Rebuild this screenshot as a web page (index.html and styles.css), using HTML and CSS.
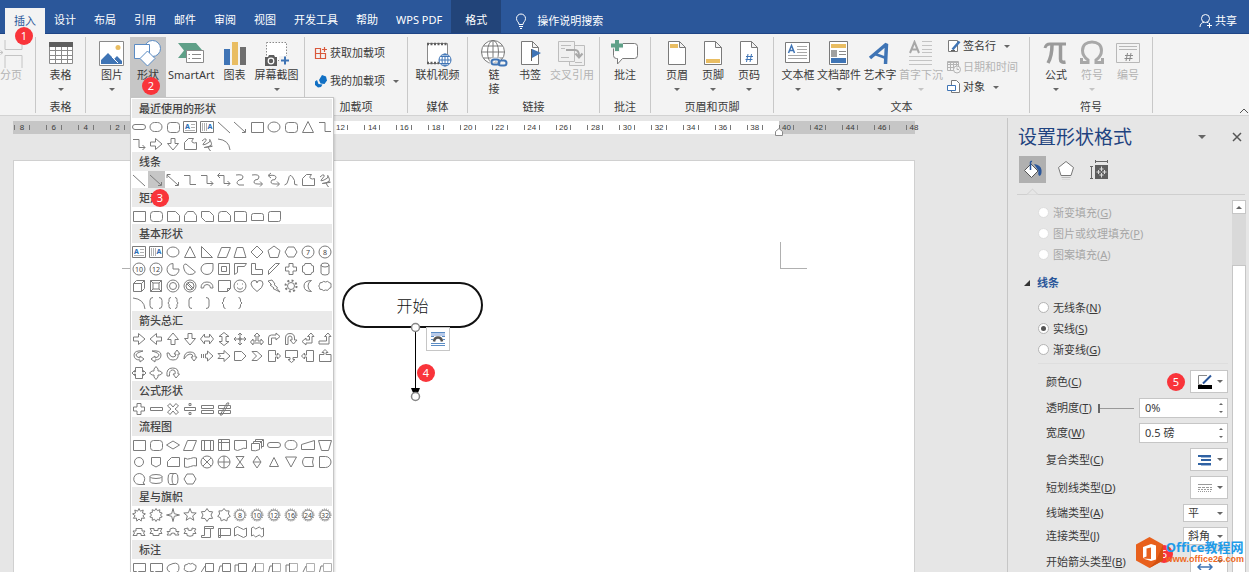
FILE: index.html
```html
<!DOCTYPE html>
<html lang="zh-CN">
<head>
  <meta charset="utf-8">
  <title>设置形状格式</title>
  <link rel="stylesheet" href="styles.css">
</head>
<body>
  <nav class="tab-bar">
    <button class="tab active">插入<span class="badge badge-tab">1</span></button>
    <button class="tab">设计</button>
    <button class="tab">布局</button>
    <button class="tab">引用</button>
    <button class="tab">邮件</button>
    <button class="tab">审阅</button>
    <button class="tab">视图</button>
    <button class="tab">开发工具</button>
    <button class="tab">帮助</button>
    <button class="tab">WPS PDF</button>
    <button class="tab context">格式</button>
    <button class="tell-me">
      <svg width="12" height="16" viewBox="0 0 12 16" fill="none" stroke="#fff"><path d="M4 11.500C4 9 1.500 8.500 1.500 5.500a4.500 4.500 0 0 1 9 0C10.500 8.500 8 9 8 11.500zM4 13.500h4M5 15.500h2"/></svg>
      操作说明搜索
    </button>
    <button class="share">
      <svg width="14" height="14" viewBox="0 0 14 14" fill="none" stroke="#fff"><circle cx="6.500" cy="4.500" r="4"/><path d="M1 13c0-3 2-4.500 4-4.800M8 8.200l1.500.8M8 11.500h5M10.500 9v5"/></svg>
      共享
    </button>
  </nav>

  <div class="ribbon">
    <section class="group">
      <div class="tools first">
        <button class="tool" disabled>
          <svg class="icon" viewBox="0 0 28 28" fill="none" stroke="#c4c4c4"><path d="M8 0v9.500h17V0M8 28V15.500h17V28M2 12.500h4M3.500 10.500l2.500 2-2.500 2"/></svg>
          分页
        </button>
      </div>
    </section>

    <section class="group">
      <div class="tools center">
        <button class="tool">
          <svg class="icon" viewBox="0 0 28 28" fill="#fff" stroke="#8a8a8a"><path d="M2.500 2.500h23v21h-23z"/><path d="M2.500 10.500h23M2.500 15.500h23M2.500 19.500h23M8.500 6v17.500M14.500 6v17.500M20.500 6v17.500"/><path fill="#5e5e5e" stroke="none" d="M2 2h24v5H2z"/></svg>
          表格<i class="caret"></i>
        </button>
      </div>
      <p class="group-name">表格</p>
    </section>

    <section class="group">
      <div class="tools">
        <button class="tool">
          <svg class="icon" viewBox="0 0 28 28"><path fill="#fff" stroke="#8a8a8a" d="M1.500 1.500h24v24h-24z"/><path fill="#3f74b5" d="M3 24v-4l7-7 6 6 3-3 5 5v3z"/><path stroke="#fff" fill="none" d="M14 17l6 6"/><circle cx="20" cy="7.500" r="2.500" fill="#e9bd62"/></svg>
          图片<i class="caret"></i>
        </button>
        <div class="dropdown">
          <button class="tool open">
            <svg class="icon" viewBox="0 0 28 28" fill="#fff" stroke="#5b8cc4"><circle cx="18.500" cy="8.500" r="8"/><path d="M.5 4.500h15v14H.5z"/><path d="M13.500 11l7.500 7.500-7.500 7.500L6 18.500z"/></svg>
            形状<i class="caret"></i>
            <span class="badge badge-shapes">2</span>
          </button>
          <div class="shape-menu" id="shape-menu"></div>
        </div>
        <button class="tool">
          <svg class="icon" viewBox="0 0 28 28"><path fill="#5fa088" d="M1 3h18l6 7-1 1H10v7H1l6-7.500z"/><path fill="#fff" stroke="#8a8a8a" d="M9.500 10.500h17v12h-17z"/><path stroke="#8a8a8a" d="M15 14.500h9M15 18.500h9M11.500 14.500h1.500M11.500 18.500h1.500"/></svg>
          SmartArt
        </button>
        <button class="tool">
          <svg class="icon" viewBox="0 0 28 28"><path fill="#3f74b5" d="M3 9h6v16H3z"/><path fill="#e9bd62" d="M11 2h6v23h-6z"/><path fill="#6e6e6e" d="M19 7h6v18h-6z"/></svg>
          图表
        </button>
        <button class="tool">
          <svg class="icon" viewBox="0 0 28 28"><path fill="#fff" stroke="#8a8a8a" stroke-dasharray="1.500 1.500" d="M3.500 2.500h20v18h-20z"/><path fill="#5e5e5e" d="M2 17h3l1-2h5l1 2h2v9H2z"/><circle cx="8" cy="21" r="2.800" fill="#5e5e5e" stroke="#fff" stroke-width="1.200"/><path fill="#f3f3f3" d="M16 16h11v9H16z"/><path stroke="#3f74b5" stroke-width="2" d="M18 20.500h8M22 16.500v8"/></svg>
          屏幕截图<i class="caret"></i>
        </button>
      </div>
    </section>

    <section class="group">
      <div class="small-tools addins">
        <button class="small-tool">
          <svg class="small-icon" viewBox="0 0 14 14" fill="none" stroke="#d9583b"><path d="M1.500 2.500h5v10h-5zM1.500 7.500h10v5h-10M6.500 7.500v5M10.500 1v5M8 3.500h5" stroke-width="1.200"/></svg>
          获取加载项
        </button>
        <button class="small-tool">
          <svg class="small-icon" viewBox="0 0 14 14" fill="#1170c4"><path d="M8 1l4 1.500 1 4-2.500 3.500-4-.5-1.500-3.500z"/><path d="M3 6l1.500 4 4 .5-1.500 2.500-3 .5L1 11V7.500z"/></svg>
          我的加载项<i class="caret"></i>
        </button>
      </div>
      <p class="group-name">加载项</p>
    </section>

    <section class="group">
      <div class="tools center">
        <button class="tool">
          <svg class="icon" viewBox="0 0 28 28" fill="#fff" stroke="#8a8a8a"><path d="M3.500 3.500h20v20h-20z"/><path stroke="#5e5e5e" stroke-width="2.500" stroke-dasharray="2 1.500" d="M3 4h21M3 23h12"/><circle cx="21" cy="20" r="6" stroke="#3f74b5"/><path fill="none" stroke="#3f74b5" d="M15 20h12M21 14v12M16.500 16.500h9M16.500 23.500h9"/><ellipse cx="21" cy="20" rx="3" ry="6" fill="none" stroke="#3f74b5"/></svg>
          联机视频
        </button>
      </div>
      <p class="group-name">媒体</p>
    </section>

    <section class="group">
      <div class="tools">
        <button class="tool">
          <svg class="icon" viewBox="0 0 28 28" fill="none" stroke="#7a7a7a"><circle cx="13" cy="12" r="11.500" fill="#fff"/><ellipse cx="13" cy="12" rx="5.500" ry="11.500"/><path d="M1.500 12h23M13 .5v23M3.500 6h19M3.500 18h19"/><rect x="11.500" y="19.500" width="8" height="5" rx="2.500" stroke="#f3f3f3" stroke-width="4"/><rect x="11.500" y="19.500" width="8" height="5" rx="2.500" stroke="#3f74b5" stroke-width="2"/><rect x="18.500" y="20.500" width="8" height="5" rx="2.500" stroke="#3f74b5" stroke-width="2"/></svg>
          <span>链<br>接</span>
        </button>
        <button class="tool">
          <svg class="icon" viewBox="0 0 28 28"><path fill="#fff" stroke="#7a7a7a" d="M5.500 1.500h11l6 6v17h-17zM16.500 1.500v6h6"/><path stroke="#5e5e5e" d="M15.500 9v12"/><path fill="#3f74b5" d="M16 9l9 4-9 5z"/></svg>
          书签
        </button>
        <button class="tool" disabled>
          <svg class="icon" viewBox="0 0 28 28" fill="#f0f0f0" stroke="#bdbdbd"><path d="M11.500 5.500h15v20h-15z"/><path d="M.5 1.500h16v20H.5z"/><path d="M3 5.500h10M3 8.500h4M3 17.500h8M17 22.500h7"/><path stroke="#a8a8a8" stroke-width="2" fill="none" d="M8 10h9q4 0 4 6M17.500 13.500l3.500 4 3.500-4"/></svg>
          交叉引用
        </button>
      </div>
      <p class="group-name">链接</p>
    </section>

    <section class="group">
      <div class="tools center">
        <button class="tool">
          <svg class="icon" viewBox="0 0 28 28"><path fill="#fff" stroke="#7a7a7a" d="M4.500 3.500h19q3 0 3 3v9q0 3-3 3h-12l-5 5.500v-5.500h-1q-3 0-3-3v-9q0-3 3-3z"/><path stroke="#f3f3f3" stroke-width="6" d="M0 5.500h12M6 0v12"/><path stroke="#5fa088" stroke-width="4" d="M0 5.500h12M6 0v11"/></svg>
          批注
        </button>
      </div>
      <p class="group-name">批注</p>
    </section>

    <section class="group">
      <div class="tools">
        <button class="tool">
          <svg class="icon" viewBox="0 0 28 28"><path fill="#fff" stroke="#7a7a7a" d="M5.500 1.500h11l6 6v17h-17zM16.500 1.500v6h6"/><path fill="#e9bd62" d="M7 4h8v4H7z"/></svg>
          页眉<i class="caret"></i>
        </button>
        <button class="tool">
          <svg class="icon" viewBox="0 0 28 28"><path fill="#fff" stroke="#7a7a7a" d="M5.500 1.500h11l6 6v17h-17zM16.500 1.500v6h6"/><path fill="#e9bd62" d="M7 19h14v4H7z"/></svg>
          页脚<i class="caret"></i>
        </button>
        <button class="tool">
          <svg class="icon" viewBox="0 0 28 28"><path fill="#fff" stroke="#7a7a7a" d="M5.500 1.500h11l6 6v17h-17zM16.500 1.500v6h6"/><path fill="none" stroke="#3f74b5" d="M13 14l-1.500 8M16.500 14L15 22M11 16.500h7M10.500 19.500h7"/></svg>
          页码<i class="caret"></i>
        </button>
      </div>
      <p class="group-name">页眉和页脚</p>
    </section>

    <section class="group">
      <div class="tools text-tools">
        <button class="tool">
          <svg class="icon" viewBox="0 0 28 28"><path fill="#fff" stroke="#7a7a7a" d="M1.500 2.500h24v20h-24z"/><path stroke="#a8a8a8" d="M13 6.500h10M13 9.500h10M13 12.500h10M4 15.500h19M4 18.500h19"/><path stroke="#3f74b5" stroke-width="1.500" fill="none" d="M4.500 13L7.500 5.500l3 7.500M5.500 10.500h4"/></svg>
          文本框<i class="caret"></i>
        </button>
        <button class="tool">
          <svg class="icon" viewBox="0 0 28 28"><path fill="#fff" stroke="#7a7a7a" d="M4.500 1.500h18v23h-18z"/><path fill="#e9bd62" d="M6 4h15v4H6z"/><path fill="#a0a0a0" d="M6 10h6v7H6z"/><path fill="#3f74b5" d="M6 18h15v5H6z"/><path stroke="#8a8a8a" d="M14 11.500h7M14 14.500h7"/></svg>
          文档部件<i class="caret"></i>
        </button>
        <button class="tool">
          <svg class="icon" viewBox="0 0 28 28"><path fill="none" stroke="#3f74b5" stroke-width="3.500" stroke-linejoin="bevel" d="M4 18l16.500-14-1 20"/><path stroke="#3f74b5" stroke-width="2.500" d="M9 14l11 4"/></svg>
          艺术字<i class="caret"></i>
        </button>
        <button class="tool" disabled>
          <svg class="icon" viewBox="0 0 28 28" fill="none" stroke="#c4c4c4"><path d="M15 1.500h10M15 5.500h10M15 9.500h10M15 12.500h10M2 16.500h23M2 20.500h23M2 24.500h23"/><path stroke="#a8a8a8" stroke-width="2" d="M3 13L7.500 2l4.500 11M4.500 9.500h6"/></svg>
          首字下沉<i class="caret"></i>
        </button>
        <div class="small-tools">
          <button class="small-tool">
            <svg class="small-icon" viewBox="0 0 14 14"><path fill="#fff" stroke="#7a7a7a" d="M1.500 1.500h9v11h-9z"/><path stroke="#3f74b5" stroke-width="2.500" d="M5.500 10.500l7-8"/><path stroke="#5e5e5e" d="M4 11.500h4"/></svg>
            签名行<i class="caret"></i>
          </button>
          <button class="small-tool" disabled>
            <svg class="small-icon" viewBox="0 0 14 14" fill="none" stroke="#b4b4b4"><path d="M.5 1.500h11v9H.5zM.5 4.500h11M.5 7.500h11M3.500 2v8.500M6.500 2v8.500M9.500 2v4M.5 2.500h11"/><circle cx="10" cy="9.500" r="3.500" fill="#f3f3f3"/><path d="M10 7.500v2h2"/></svg>
            日期和时间
          </button>
          <button class="small-tool">
            <svg class="small-icon" viewBox="0 0 14 14" fill="#fff"><path stroke="#7a7a7a" d="M4.500.5h5l3 3v9h-8z"/><path stroke="#3f74b5" d="M.5 5.500h8v5h-8z"/></svg>
            对象<i class="caret"></i>
          </button>
        </div>
      </div>
      <p class="group-name">文本</p>
    </section>

    <section class="group">
      <div class="tools">
        <button class="tool">
          <svg class="icon" viewBox="0 0 28 28" fill="none" stroke="#9a9a9a"><path stroke-width="3" d="M3 8q1-4 5-4h16"/><path stroke-width="3.500" d="M10 5q0 11-4 18M18.500 5v14q0 4 5 3"/></svg>
          公式<i class="caret"></i>
        </button>
        <button class="tool" disabled>
          <svg class="icon" viewBox="0 0 28 28" fill="none" stroke="#a8a8a8"><path stroke-width="3" d="M3.500 18v4.500H10V20Q4.500 16 4.500 10.500C4.500 5 8.500 2 14 2s9.500 3 9.500 8.500Q23.500 16 18 20v2.500h6.500V18"/></svg>
          符号<i class="caret"></i>
        </button>
        <button class="tool" disabled>
          <svg class="icon" viewBox="0 0 28 28" fill="none" stroke="#b8b8b8"><path d="M2.500 3.500h23v19h-23zM5 6.500h18M5 9.500h18"/><path stroke="#8a8a8a" d="M13.500 13L12 21M17 13l-1.500 8M11 15.500h8M10.500 18.500h8"/></svg>
          编号
        </button>
      </div>
      <p class="group-name">符号</p>
    </section>

    <button class="collapse" aria-label="折叠功能区">
      <svg width="10" height="7" viewBox="0 0 10 7" fill="none" stroke="#555"><path d="M1 6l4-4 4 4"/></svg>
    </button>
  </div>

  <div class="workspace">
    <main class="document">
      <div class="ruler">
        <div class="ruler-scale">
          <span>8</span><span>6</span><span>4</span><span>2</span><span></span>
          <span>2</span><span>4</span><span>6</span><span>8</span><span>10</span>
          <span>12</span><span>14</span><span>16</span><span>18</span><span>20</span>
          <span>22</span><span>24</span><span>26</span><span>28</span><span>30</span>
          <span>32</span><span>34</span><span>36</span><span>38</span><span>40</span>
          <span>42</span><span>44</span><span>46</span><span>48</span>
        </div>
        <svg class="indent" width="8" height="8" viewBox="0 0 8 8"><path fill="#fff" stroke="#8a8a8a" d="M.5 7.500v-4L4 .5l3.500 3v4z"/></svg>
      </div>
      <div class="page">
        <i class="crop crop-left"></i>
        <i class="crop crop-right"></i>
        <div class="terminator">开始</div>
        <svg class="connector" width="11" height="80" viewBox="0 0 11 80">
          <path stroke="#000" d="M5.500 5v64"/>
          <path fill="#000" d="M1 66h9L7.500 72h-4z"/>
          <circle cx="5.500" cy="5.500" r="4" fill="#fff" stroke="#868686" stroke-width="1.500"/>
          <circle cx="5.500" cy="74.500" r="4" fill="#fff" stroke="#868686" stroke-width="1.500"/>
        </svg>
        <button class="layout-options" aria-label="布局选项">
          <svg width="16" height="16" viewBox="0 0 16 16" fill="none"><path fill="#b8cbea" d="M1 1h14v4H1z"/><path stroke="#5b8cc4" d="M1 1.500h14M1 5.500h3M12 5.500h3M1 8.500h2M13 8.500h2M1 12.500h14M1 14.500h14"/><path stroke="#555" stroke-width="2.500" d="M4 10.500Q4.500 6.500 8 6.500t4 4"/></svg>
        </button>
        <span class="badge badge-arrow">4</span>
      </div>
    </main>

    <aside class="panel">
      <header class="panel-head">
        <h2>设置形状格式</h2>
        <button class="panel-menu" aria-label="任务窗格选项"><i class="caret"></i></button>
        <button class="panel-close" aria-label="关闭">
          <svg width="10" height="10" viewBox="0 0 10 10" stroke="#555" stroke-width="1.500"><path d="M1 1l8 8M9 1L1 9"/></svg>
        </button>
      </header>
      <div class="panel-tabs">
        <button class="panel-tab selected" aria-label="填充与线条">
          <svg width="20" height="20" viewBox="0 0 20 20"><path fill="#2b579a" d="M11 4q7 1 7.500 6t-2 6q-2-1-1-5z"/><path fill="#fff" stroke="#555" d="M8 4l7 7-6.500 6.500-7-7z"/><path stroke="#2b579a" stroke-width="1.500" fill="none" d="M7.500 10V2.500q0-1.500 1.500-1"/></svg>
        </button>
        <button class="panel-tab" aria-label="效果">
          <svg width="20" height="20" viewBox="0 0 20 20"><path fill="#fff" stroke="#777" d="M10 1.500l7.500 6L15 15.500H5L2.500 7.500z"/><path stroke="#bbb" d="M5.500 17.500h9"/><path stroke="#d8d8d8" d="M6 19.500h8"/></svg>
        </button>
        <button class="panel-tab size-tab" aria-label="布局属性">
          <svg width="20" height="20" viewBox="0 0 20 20" fill="none" stroke="#666"><path d="M6 1.500h13M6.500 0v3M18.500 0v3M2.500 6v13M1 6.500h3M1 18.500h3"/><path fill="#5e5e5e" stroke="none" d="M6 5h13v14H6z"/><path stroke="#ddd" d="M7.500 12h4M13.500 12h4M12.500 6.500v4.500M12.500 13v4.500M9.500 10v4M15.500 10v4M10.500 9h4M10.500 15h4"/></svg>
        </button>
      </div>
      <div class="panel-body">
        <form class="options">
          <label class="radio"><input type="radio" name="fill" disabled>渐变填充(<u>G</u>)</label>
          <label class="radio"><input type="radio" name="fill" disabled>图片或纹理填充(<u>P</u>)</label>
          <label class="radio"><input type="radio" name="fill" disabled>图案填充(<u>A</u>)</label>

          <h3>线条</h3>
          <label class="radio"><input type="radio" name="line">无线条(<u>N</u>)</label>
          <label class="radio"><input type="radio" name="line" checked>实线(<u>S</u>)</label>
          <label class="radio"><input type="radio" name="line">渐变线(<u>G</u>)</label>

          <div class="fields">
            <div class="field">
              <label for="color">颜色(<u>C</u>)</label>
              <span class="badge">5</span>
              <button type="button" class="picker" id="color">
                <svg width="16" height="16" viewBox="0 0 16 16"><path fill="#fff" stroke="#8a8a8a" d="M10 1.500H1.500v9H5"/><path stroke="#2b579a" stroke-width="2" d="M6 9.500l8-8"/><path fill="#000" d="M1 11h14v4H1z"/></svg>
                <i class="caret"></i>
              </button>
            </div>
            <div class="field">
              <label for="alpha">透明度(<u>T</u>)</label>
              <input type="range" id="alpha-slider" aria-label="透明度" min="0" max="100" value="0">
              <span class="spin"><input type="text" id="alpha" value="0%"><i class="spin-arrows"></i></span>
            </div>
            <div class="field">
              <label for="weight">宽度(<u>W</u>)</label>
              <span class="spin"><input type="text" id="weight" value="0.5 磅"><i class="spin-arrows"></i></span>
            </div>
            <div class="field">
              <label for="compound">复合类型(<u>C</u>)</label>
              <button type="button" class="picker" id="compound">
                <svg width="16" height="16" viewBox="0 0 16 16"><path stroke="#2f62a3" stroke-width="2" d="M1 4h13M4 8h10M1 12h13"/><path stroke="#9db7da" d="M4 5.500h10M4 13.500h10"/></svg>
                <i class="caret"></i>
              </button>
            </div>
            <div class="field">
              <label for="dash">短划线类型(<u>D</u>)</label>
              <button type="button" class="picker" id="dash">
                <svg width="16" height="16" viewBox="0 0 16 16" stroke="#9a9a9a"><path d="M1 4.500h14"/><path stroke-dasharray="3 1" d="M1 7.500h14"/><path stroke-dasharray="2 1" d="M1 9.500h14"/><path stroke-dasharray="1 1" d="M1 11.500h14"/></svg>
                <i class="caret"></i>
              </button>
            </div>
            <div class="field">
              <label for="cap">线端类型(<u>A</u>)</label>
              <span class="select"><select id="cap"><option>平</option></select><i class="caret"></i></span>
            </div>
            <div class="field">
              <label for="join">连接类型(<u>J</u>)</label>
              <span class="select"><select id="join"><option>斜角</option></select><i class="caret"></i></span>
            </div>
            <div class="field">
              <label for="begin">开始箭头类型(<u>B</u>)</label>
              <span class="badge badge-begin">6</span>
              <button type="button" class="picker" id="begin">
                <svg width="16" height="16" viewBox="0 0 16 16"><path stroke="#3f74b5" stroke-width="1.500" fill="none" d="M1 13h14M4 10l-3 3 3 3M12 10l3 3-3 3"/></svg>
                <i class="caret"></i>
              </button>
            </div>
          </div>
        </form>
        <div class="scrollbar">
          <button class="scroll-up" aria-label="向上滚动"><i class="caret"></i></button>
          <div class="scroll-thumb"></div>
        </div>
      </div>
    </aside>
  </div>

  <div class="site-mark">
    <svg width="27" height="31" viewBox="0 0 27 31"><path fill="#e8601c" d="M13.500 0L27 7.500v16L13.500 31 0 23.500v-16z"/><path fill="#d3500f" d="M13.500 31L27 23.500v-16L20 24z"/><path fill="#fff" d="M7 10l8-3 5 1.500v14L15 24l-8-2.500 8 .5V10.500l-4.500 1v8L7 21z"/></svg>
    <div>
      <p class="site-name">Office教程网</p>
      <p class="site-url">www.office26.com</p>
    </div>
  </div>

  <script src="shapes.js"></script>
</body>
</html>
```
FILE: styles.css
```css
* {
  box-sizing: border-box;
}

body {
  display: flex;
  flex-direction: column;
  position: relative;
  height: 100vh;
  margin: 0;
  overflow: hidden;
  background: #e6e6e6;
  color: #3a3a3a;
  font: 11px/14px "Noto Sans", "Noto Sans CJK SC", sans-serif;
}

button,
input,
select {
  margin: 0;
  padding: 0;
  border: 0;
  background: none;
  color: inherit;
  font: inherit;
}

h2,
h3,
p {
  margin: 0;
}

svg {
  flex: none;
}

.caret {
  flex: none;
  width: 0;
  height: 0;
  border: 3px solid transparent;
  border-top-color: #666;
  border-bottom: 0;
}

.badge {
  flex: none;
  width: 18px;
  height: 18px;
  border-radius: 50%;
  background: #f9343a;
  color: #fff;
  line-height: 18px;
  text-align: center;
}

/* Tabs */

.tab-bar {
  display: flex;
  flex: none;
  height: 34px;
  padding-left: 5px;
  background: #2b579a;
  border-bottom: 1px solid #1f4586;
  color: #fff;
}

.tab {
  position: relative;
  padding: 7px 9px 0;
  white-space: nowrap;
}

.tab.active {
  height: 27px;
  margin-top: 8px;
  padding-top: 0;
  padding-bottom: 2px;
  background: #f3f3f3;
  color: #2b579a;
}

.tab.context {
  padding: 7px 14px 0;
  background: #224479;
}

.badge-tab {
  position: absolute;
  top: 19px;
  left: 10px;
  z-index: 2;
}

.tell-me,
.share {
  display: flex;
  align-items: center;
  gap: 10px;
  padding: 8px 0 0 14px;
}

.share {
  gap: 2px;
  margin-left: auto;
  padding-right: 12px;
}

/* Ribbon */

.ribbon {
  display: grid;
  grid-template-columns: 36px 50px 219px 103px 60px 132px 51px 123px 256px 123px 1fr;
  flex: none;
  position: relative;
  z-index: 1;
  height: 82px;
  padding-top: 3px;
  background: #f3f3f3;
  border-bottom: 1px solid #d2d2d2;
}

.group {
  display: flex;
  flex-direction: column;
  min-width: 0;
  height: 76px;
  border-right: 1px solid #c8c8c8;
}

.tools {
  display: flex;
  flex: none;
  height: 60px;
  padding-left: 8px;
}

.tools.first {
  justify-content: flex-end;
  padding: 0 6px 0 0;
}

.tools.center {
  justify-content: center;
  padding: 0;
}

.tool {
  display: flex;
  flex: none;
  flex-direction: column;
  align-items: center;
  position: relative;
  min-width: 36px;
  height: 60px;
  padding: 3px 2px 0;
  white-space: nowrap;
}

.tool:disabled,
.small-tool:disabled {
  color: #b4b4b4;
}

.tool:disabled .caret {
  border-top-color: #c4c4c4;
}

.tool .icon {
  width: 28px;
  height: 28px;
}

.tool .caret {
  margin-top: 6px;
}

.tool.open {
  background: #c6c6c6;
}

.text-tools {
  gap: 1px;
  padding-left: 6px;
}

.text-tools .tool {
  padding-right: 0;
  padding-left: 0;
}

.group-name {
  line-height: 20px;
  text-align: center;
}

.small-tools {
  display: flex;
  flex: none;
  flex-direction: column;
  justify-content: space-between;
  height: 60px;
  padding: 2px 0 3px 3px;
}

.small-tools.addins {
  padding: 9px 0 9px 9px;
}

.small-tool {
  display: flex;
  align-items: center;
  gap: 2px;
  white-space: nowrap;
}

.small-tool .caret {
  margin-left: 6px;
}

.small-icon {
  width: 14px;
  height: 14px;
}

.collapse {
  align-self: end;
  justify-self: end;
  height: 12px;
}

.badge-shapes {
  position: absolute;
  top: 40px;
  left: 12px;
}

/* Shape gallery */

.dropdown {
  position: relative;
}

.shape-menu {
  position: absolute;
  top: 60px;
  left: 0;
  width: 204px;
  padding-top: 1px;
  background: #fff;
  border: 1px solid #c6c6c6;
  box-shadow: 1px 1px 2px rgba(0, 0, 0, 0.15);
}

.shape-menu h3 {
  margin: 0 1px;
  padding-left: 7px;
  background: #eaeaea;
  color: #444;
  font-size: 11px;
  font-weight: 500;
  line-height: 19px;
}

.shape-grid {
  display: grid;
  grid-template-columns: repeat(12, 1fr);
}

.shape {
  display: flex;
  align-items: center;
  justify-content: center;
  height: 17px;
}

.shape.selected {
  background: #c6c6c6;
}

.shape svg {
  width: 16px;
  height: 16px;
  fill: none;
  stroke: #7c7c7c;
}

.shape text {
  fill: #444;
  stroke: none;
  font-size: 7px;
  text-anchor: middle;
}

.shape .letter {
  fill: #2b6cb5;
  font-weight: bold;
}

.shape .faint {
  stroke: #b0b0b0;
}

.badge-line {
  position: absolute;
  top: 91px;
  left: 20px;
}

/* Document */

.workspace {
  display: grid;
  grid-template-columns: 1fr 242px;
  flex: 1;
  min-height: 0;
  padding-top: 2px;
}

.document {
  display: flex;
  flex-direction: column;
  gap: 26px;
  min-width: 0;
  padding: 3px 92px 0 13px;
}

.ruler {
  flex: none;
  position: relative;
  height: 13px;
  background: linear-gradient(to right, #c6c6c6 136px, #fff 136px, #fff 766px, #c6c6c6 766px);
}

.ruler-scale {
  display: flex;
  margin: 0 -15px 0 -7px;
  font: 8px/13px "Liberation Sans", sans-serif;
}

.ruler-scale span {
  display: flex;
  flex: 1 0 0;
  align-items: center;
  justify-content: space-between;
  padding: 0 8px;
}

.ruler-scale span::before,
.ruler-scale span::after {
  content: "";
  width: 1px;
  height: 5px;
  background: #777;
}

.ruler-scale span:last-child::after {
  background: none;
}

.indent {
  position: absolute;
  top: 7px;
  left: 762px;
}

.page {
  flex: 1;
  position: relative;
  background: #fff;
  border: 1px solid #d0d0d0;
  border-bottom: 0;
}

.crop {
  position: absolute;
  top: 81px;
  width: 27px;
  height: 27px;
  border-bottom: 1px solid #b0b0b0;
}

.crop-left {
  left: 108px;
  border-right: 1px solid #b0b0b0;
}

.crop-right {
  right: 107px;
  border-left: 1px solid #b0b0b0;
}

.terminator {
  position: absolute;
  top: 121px;
  left: 328px;
  width: 141px;
  height: 46px;
  border: 2px solid #111;
  border-radius: 23px;
  color: #111;
  font: 300 16px/46px "Liberation Serif", "Noto Sans CJK SC", serif;
  text-align: center;
}

.connector {
  position: absolute;
  top: 161px;
  left: 396px;
}

.layout-options {
  display: flex;
  align-items: center;
  justify-content: center;
  position: absolute;
  top: 166px;
  left: 412px;
  width: 24px;
  height: 24px;
  background: #fff;
  border: 1px solid #c6c6c6;
}

.badge-arrow {
  position: absolute;
  top: 203px;
  left: 403px;
}

/* Format pane */

.panel {
  display: flex;
  flex-direction: column;
  min-height: 0;
  border-left: 1px solid #c6c6c6;
}

.panel-head {
  display: flex;
  align-items: center;
  padding: 8px 7px 0 10px;
}

.panel-head h2 {
  flex: 1;
  color: #1f4380;
  font-size: 19px;
  font-weight: normal;
  line-height: 22px;
}

.panel-menu {
  margin-right: 26px;
}

.panel-menu .caret {
  display: block;
  border-width: 4px;
  border-bottom: 0;
}

.panel-close svg {
  display: block;
}

.panel-tabs {
  display: flex;
  gap: 6px;
  position: relative;
  margin: 8px 4px 0 9px;
  padding: 0 2px 11px;
  border-bottom: 1px solid #cfcfcf;
}

.panel-tabs::after {
  content: "";
  position: absolute;
  bottom: -5px;
  left: 11px;
  width: 8px;
  height: 8px;
  background: #e6e6e6;
  border: solid #cfcfcf;
  border-width: 1px 0 0 1px;
  clip-path: polygon(0 0, 100% 0, 0 100%);
  transform: rotate(45deg);
}

.panel-tab {
  display: flex;
  align-items: center;
  justify-content: center;
  width: 27px;
  height: 27px;
}

.panel-tab.selected {
  background: #b0b0b0;
}

.panel-body {
  display: flex;
  flex: 1;
  min-height: 0;
  margin-top: 5px;
}

.options {
  flex: 1;
  padding: 2px 4px 0 0;
}

.radio {
  display: flex;
  align-items: center;
  height: 21px;
  padding-left: 30px;
  white-space: pre;
}

.radio input {
  appearance: none;
  display: grid;
  place-items: center;
  width: 11px;
  height: 11px;
  margin-right: 4px;
  background: #fff;
  border: 1px solid #b4b4b4;
  border-radius: 50%;
}

.radio input:checked::before {
  content: "";
  width: 5px;
  height: 5px;
  border-radius: 50%;
  background: #555;
}

.radio input:disabled {
  border-color: #dedede;
}

.radio:has(:disabled) {
  color: #a6a6a6;
}

.options h3 {
  display: flex;
  align-items: center;
  gap: 7px;
  height: 20px;
  margin: 8px 0 4px;
  padding-left: 16px;
  color: #2b579a;
  font-size: 11px;
}

.options h3::before {
  content: "";
  border: solid transparent;
  border-width: 0 0 6px 6px;
  border-bottom-color: #333;
}

.fields {
  display: flex;
  flex-direction: column;
  gap: 5px;
  margin: 3px 0 0 30px;
  padding: 6px 0 0 8px;
  border-top: 1px solid #dedede;
}

.field {
  display: flex;
  align-items: center;
  position: relative;
}

.field label {
  margin-right: auto;
  white-space: nowrap;
}

.field .badge {
  margin-right: 5px;
}

.field .badge-begin {
  position: absolute;
  top: -5px;
  right: 50px;
}

.picker,
.spin,
.select {
  display: flex;
  align-items: center;
  background: #fff;
  border: 1px solid #c6c6c6;
}

.picker {
  gap: 4px;
  height: 23px;
  padding: 0 4px 0 6px;
}

.spin {
  width: 89px;
  height: 20px;
  padding: 0 4px 0 5px;
}

.spin input {
  flex: 1;
  min-width: 0;
}

.spin-arrows {
  display: flex;
  flex-direction: column;
  gap: 6px;
}

.spin-arrows::before,
.spin-arrows::after {
  content: "";
  border: 2px solid transparent;
}

.spin-arrows::before {
  border-top: 0;
  border-bottom-color: #666;
}

.spin-arrows::after {
  border-top-color: #666;
  border-bottom: 0;
}

.select {
  width: 45px;
  height: 18px;
  padding: 0 4px;
}

.select select {
  appearance: none;
  flex: 1;
}

#alpha-slider {
  appearance: none;
  width: 36px;
  height: 9px;
  margin-right: 5px;
  background: linear-gradient(#999, #999) center / 100% 1px no-repeat;
}

#alpha-slider::-webkit-slider-thumb {
  appearance: none;
  width: 2px;
  height: 9px;
  background: #666;
}

.scrollbar {
  display: flex;
  flex-direction: column;
  width: 14px;
  margin-right: 3px;
  background: #d9d9d9;
}

.scroll-up {
  display: flex;
  align-items: center;
  justify-content: center;
  height: 14px;
  background: #fff;
  border: 1px solid #c6c6c6;
}

.scroll-up .caret {
  transform: rotate(180deg);
}

.scroll-thumb {
  flex: 1;
  margin-top: 51px;
  background: #fff;
  border: 1px solid #c6c6c6;
  border-bottom: 0;
}

/* Site mark */

.site-mark {
  display: flex;
  align-items: center;
  gap: 3px;
  position: absolute;
  right: 5px;
  bottom: 4px;
  z-index: 1;
  font-weight: bold;
}

.site-name {
  color: #1e9be9;
  font-size: 13px;
  line-height: 13px;
}

.site-url {
  color: #ee6a1f;
  font-family: "Liberation Sans", sans-serif;
  font-size: 9px;
  line-height: 10px;
}
```
FILE: shapes.js
```js
// Each shape is [name, drawing] on a 16 x 16 grid. A drawing is either the
// path data or a bit of SVG markup.
var textBox = '<path d="M1.500 2.500h13v11h-13z"/><path class="faint" d="M9 5.500h4M9 8.500h4M3 11.500h10"/><text class="letter" x="5.500" y="10">A</text>';
var textBoxV = '<path d="M1.500 2.500h13v11h-13z"/><path class="faint" d="M3.500 4v8M5.500 4v8M7.500 4v8"/><text class="letter" x="11" y="10">A</text>';
var line = "M2 3l12 11";
var arrow = "M2 3l11 10M13.500 10v3.500H10";
var doubleArrow = "M2 3l11 10M13.500 10v3.500H10M2 6V2.500h3.500";
var elbow = "M2 3.500h6v9h6";
var elbowArrow = "M2 3.500h6v8h6M11.500 9l2.500 2.500-2.500 2.500";
var freeform = "M2.500 13.500v-7l4-4h5q-3 3-1 4t4 0v7z";
var scribble = "M3 5q3-3 4-2t-2 4 2 1 4-4 1 2-4 5 1 0 3-1-2 3 1 1";
var arc = "M2 3q11 1 12 11";
var rect = "M2.500 3.500h12v10h-12z";
var roundRect = '<rect x="2.500" y="3.500" width="12" height="10" rx="3"/>';
var terminator = '<rect x="1.500" y="5.500" width="13" height="5" rx="2.500"/>';
var octoRect = '<rect x="2" y="3.500" width="12" height="9" rx="4.500"/>';
var ellipse = '<ellipse cx="8" cy="8" rx="6" ry="5"/>';
var triangle = "M8 2.500l5.500 11h-11z";
var rightArrow = "M2.500 6h5V2.500L14 8l-6.500 5.500V10h-5z";
var downArrow = "M6 2.500v5H2.500L8 14l5.500-6.500H10v-5z";
var hexagon = "M5 3h6l3 5-3 5H5L2 8z";
var parallelogram = "M5.500 3.500h9l-4 10h-9z";
var plus = "M6 2.500h4V6h3.500v4H10v3.500H6V10H2.500V6H6z";

function numbered(n, teeth) {
  return '<circle cx="8" cy="8" r="' + (teeth ? 5 : 6) + '"/>' +
    (teeth ? '<circle cx="8" cy="8" r="6" stroke-dasharray="1 1.200"/>' : '') +
    '<text x="8" y="10.500">' + n + '</text>';
}

function star(points, inner) {
  var d = "";
  for (var i = 0; i < points * 2; i++) {
    var r = i % 2 ? inner : 6.5;
    var a = Math.PI * i / points - Math.PI / 2;
    d += (i ? "L" : "M") + (8 + r * Math.cos(a)).toFixed(1) + " " + (8 + r * Math.sin(a)).toFixed(1);
  }
  return d + "z";
}

var categories = [
  ["最近使用的形状", [
    ["终止", terminator], ["准备", octoRect], ["圆角矩形", roundRect],
    ["文本框", textBox], ["竖排文本框", textBoxV], ["直线", line],
    ["箭头", arrow], ["矩形", rect], ["椭圆", ellipse], ["圆角矩形", roundRect],
    ["三角形", triangle], ["肘形", elbow], ["肘形箭头", elbowArrow],
    ["右箭头", rightArrow], ["下箭头", downArrow], ["任意多边形", freeform],
    ["自由曲线", scribble], ["弧形", arc]
  ]],
  ["线条", [
    ["直线", line], ["箭头", arrow], ["双箭头", doubleArrow], ["肘形", elbow],
    ["肘形箭头", elbowArrow], ["肘形双箭头", elbowArrow + "M4 1L1.500 3.500 4 6"],
    ["曲线连接", "M4 3q7-1 7 2T7 8q-4 3 0 5h5"],
    ["曲线箭头", "M3 3q7-1 7 2T6 8q-3 4 3 4h4M11 9.500l2.500 2.500-2.500 2.500"],
    ["曲线双箭头", "M3 3.500q7-1 7 2T6 8q-3 4 3 4h4M11 9.500l2.500 2.500-2.500 2.500M5 1L2 3.500 5 6"],
    ["曲线", "M1.500 13q3 0 4-6t4-2 2 6 3 2"], ["任意多边形", freeform], ["自由曲线", scribble]
  ]],
  ["矩形", [
    ["矩形", rect], ["圆角矩形", roundRect], ["剪去单角", "M2.500 3.500h8l4 4v6h-12z"],
    ["剪去同侧角", "M5.500 3.500h6l3 4v6h-12v-6z"], ["剪去对角", "M2.500 3.500h8l4 4v6h-8l-4-4z"],
    ["单圆角剪角", "M5.500 3.500h5l4 4v6h-12v-7q0-3 3-3z"],
    ["单圆角", "M2.500 3.500h10q2 0 2 2v8h-12z"], ["同侧圆角", "M4.500 5.500h8q2 0 2 2v5h-12v-5q0-2 2-2z"],
    ["对角圆角", "M4.500 3.500h10v8q0 2-2 2h-10v-8q0-2 2-2z"]
  ]],
  ["基本形状", [
    ["文本框", textBox], ["竖排文本框", textBoxV], ["椭圆", ellipse], ["三角形", triangle],
    ["直角三角形", "M2.500 2.500l11 11h-11z"], ["平行四边形", parallelogram],
    ["梯形", "M5 3.500h6l3 10H2z"], ["菱形", "M8 2l6 6-6 6-6-6z"],
    ["五边形", "M8 2l6 4.500-2 7H4l-2-7z"], ["六边形", hexagon],
    ["七边形", numbered(7)], ["八边形", numbered(8)],
    ["十边形", numbered(10)], ["十二边形", numbered(12)],
    ["饼形", "M8 2.500V8h6a6 6 0 1 1-6-5.500z"], ["弦形", "M4 3l9.500 8q-2 3-6 2.500T2 8t2-5z"],
    ["泪滴形", "M14 2.500V8a6 5.500 0 1 1-6-5.500z"], ["图文框", "M2.500 2.500h11v11h-11zM5.500 5.500h5v5h-5z"],
    ["半闭框", "M2.500 2.500h12l-2 3h-7v6l-3 2z"], ["L 形", "M2.500 2.500h4v6h7v5h-11z"],
    ["斜纹", "M2.500 13.500v-4l7-7h4z"], ["十字形", plus],
    ["缺角矩形", "M5 2.500h6q0 2.500 2.500 2.500v6q-2.500 0-2.500 2.500H5Q5 11 2.500 11V5Q5 5 5 2.500z"],
    ["圆柱形", "M4 4v8q0 2 4 2t4-2V4q0-2-4-2T4 4q0 2 4 2t4-2"],
    ["立方体", "M2.500 5.500h8v8h-8zM2.500 5.500l3-3h8v8l-3 3M10.500 5.500l3-3"],
    ["棱台", "M2.500 2.500h11v11h-11zM5 5h6v6H5zM2.500 2.500L5 5M13.500 2.500L11 5M2.500 13.500L5 11M13.500 13.500L11 11"],
    ["圆环", '<circle cx="8" cy="8" r="6"/><circle cx="8" cy="8" r="3.500"/>'],
    ["禁止符", '<circle cx="8" cy="8" r="6"/><circle cx="8" cy="8" r="4"/><path d="M5 6l5 5M6 5l5 5"/>'],
    ["空心弧", "M2 10q0-6 6-6t6 6h-2.500q0-3.500-3.500-3.500T4.500 10z"],
    ["折角形", "M2.500 2.500h12v8l-3 3h-9zM11.500 13.500v-3h3"],
    ["笑脸", '<circle cx="8" cy="8" r="6"/><path d="M5 9.500q3 3.500 6 0M5.500 5.500v1M10.500 5.500v1"/>'],
    ["心形", "M8 13.500Q2 9 2 6t3-3.500 3 2.500q0-2.500 3-2.500T14 6t-6 7.500z"],
    ["闪电形", "M2 3l4-1 3 4-1 .5 3.500 3-1 .5L14 14 7 10.500l1-.5-4-3 1.500-.5z"],
    ["太阳形", '<circle cx="8" cy="8" r="3.500"/><circle cx="8" cy="8" r="5.500" stroke-width="2" stroke-dasharray="2 2.300"/>'],
    ["新月形", "M11.500 2.500Q4 2.500 4 8t7.500 5.500Q8 12 8 8t3.500-5.500z"],
    ["云形", "M5 11.500Q2 12 2.500 9.500 1 8 2.500 6.500 2.500 4 5 4.500 6.500 2.500 8.500 4 11 2.500 12 4.500 15 5 14 7.500 15 10 12 10.500 11 13.500 8.500 12 6.500 13.500 5 11.500z"],
    ["弧形", arc], ["双括号", "M5 2.500q-3 0-3 3v5q0 3 3 3M11 2.500q3 0 3 3v5q0 3-3 3"],
    ["双大括号", "M6 2.500q-2 0-2 2v2L3 8l1 1.500v2q0 2 2 2M10 2.500q2 0 2 2v2L13 8l-1 1.500v2q0 2-2 2"],
    ["左括号", "M10 2.500Q7 2.500 7 5v6q0 2.500 3 2.500"], ["右括号", "M7 2.500q3 0 3 2.500v6q0 2.500-3 2.500"],
    ["左大括号", "M9.500 2.500Q7.500 2.500 7.500 5v1.500L6 8l1.500 1.500V11q0 2.500 2 2.500"],
    ["右大括号", "M6.500 2.500q2 0 2 2.500v1.500L10 8 8.500 9.500V11q0 2.500-2 2.500"]
  ]],
  ["箭头总汇", [
    ["右箭头", rightArrow], ["左箭头", "M13.500 6h-5V2.500L2 8l6.500 5.500V10h5z"],
    ["上箭头", "M6 13.500v-5H2.500L8 2l5.500 6.500H10v5z"], ["下箭头", downArrow],
    ["左右箭头", "M1.500 8l4-5v3h5V3l4 5-4 5v-3h-5v3z"],
    ["上下箭头", "M8 1.500l5 4h-3v5h3l-5 4-5-4h3v-5H3z"],
    ["十字箭头", "M8 2v12M2 8h12M6 4l2-2 2 2M6 12l2 2 2-2M4 6L2 8l2 2M12 6l2 2-2 2M7 7h2v2H7z"],
    ["丁字箭头", "M8 2l3 3H9v5h3V8l2.500 3-2.500 3v-2H4v2l-2.500-3L4 8v2h3V5H5z"],
    ["圆角右箭头", "M2.500 13.500V7q0-3 3-3H10V2l4 3.500L10 9V7H5.500v6.500z"],
    ["手杖形箭头", "M2.500 13.500V7q0-4.500 4.500-4.500T11.500 7v2H14l-3.500 4L7 9h2V7q0-2-2-2T5 7v6.500z"],
    ["直角双向箭头", "M11 2l3 3.500h-2V12H6v2l-4-3.500L6 7v2h3.500V5.500h-2z"],
    ["直角上箭头", "M11 2l3 3.500h-2V13H2v-3h7.500V5.500h-2z"],
    ["左弧形箭头", "M12 3Q3 2 3 7t6 5v2l4-3-4-3v2Q5 9 5 7t7-4z"],
    ["右弧形箭头", "M4 3q9-1 9 4t-6 5v2l-4-3 4-3v2q4-1 4-3T4 3z"],
    ["下弧形箭头", "M2 5q0 7 6 7t5-6h2l-3-4-3 4h2q0 3-3 3T4 5z"],
    ["上弧形箭头", "M2 11q0-7 6-7t5 5h2l-3 4-3-4h2q0-3-3-3T2 11z"],
    ["虚尾箭头", "M2.500 6v4M4.500 6v4M6.500 6h2V3L14 8l-5.500 5v-3h-2z"],
    ["燕尾箭头", "M2 5.500h6V2.500L14 8l-6 5.500v-3H2L4.500 8z"],
    ["五边形箭头", "M2.500 3.500h7L14 8l-4.500 4.500h-7z"], ["V 形箭头", "M3 3.500h5L13 8l-5 4.500H3L7.500 8z"],
    ["右箭头标注", "M2.500 2.500h7V7h2V5l3 3-3 3V9h-2v4.500h-7z"],
    ["下箭头标注", "M2.500 2.500h12v7H10v2h2l-3.500 3-3.500-3h2v-2H2.500z"],
    ["左箭头标注", "M13.500 2.500h-7V7h-2V5l-3 3 3 3V9h2v4.500h7z"],
    ["上箭头标注", "M2.500 13.500v-7H7v-2H5l3-3 3 3H9v2h5v7z"],
    ["左右箭头标注", "M4.500 2.500h7V7h1V5.500L15 8l-2.500 2.500V9h-1v4.500h-7V9h-1v1.500L1 8l2.500-2.500V7h1z"],
    ["十字箭头标注", "M8 1.500l2 2.500v2h2l2.500 2L12 10h-2v2l-2 2.500L6 12v-2H4L1.500 8 4 6h2V4z"],
    ["环形箭头", "M2 11q-1-8 5.500-8T13 9h1.500L11 13 8 9h2q1-4-2.500-4T4.500 11z"]
  ]],
  ["公式形状", [
    ["加号", plus], ["减号", "M2.500 6.500h12v3h-12z"],
    ["乘号", "M5 2.500L8 6l3-3.500L13.500 5 10 8l3.500 3-2.500 2.500L8 10l-3 3.500L2.500 11 6 8 2.500 5z"],
    ["除号", "M2.500 6.500h11v3h-11zM7 2.500h2v2H7zM7 11.500h2v2H7z"],
    ["等号", "M2.500 4.500h12v3h-12zM2.500 9.500h12v3h-12z"],
    ["不等号", "M2.500 4.500h12v3h-12zM2.500 9.500h12v3h-12zM4 14l7-12h2L6 14z"]
  ]],
  ["流程图", [
    ["过程", rect], ["可选过程", roundRect], ["决策", "M8 4l6.500 4L8 12 1.500 8z"],
    ["数据", parallelogram], ["预定义过程", "M2.500 3.500h12v10h-12zM5.500 3.500v10M11.500 3.500v10"],
    ["内部贮存", "M2.500 2.500h11v11h-11zM5.500 2.500v11M2.500 5.500h11"],
    ["文档", "M2.500 3.500h12v8q-3-1-6 1t-6 0z"],
    ["多文档", "M2.500 6.500h8v6q-4 2-8 1zM4.500 6V4.500h8v7M6.500 4V2.500h8v7h-2M11 6l3-3"],
    ["终止", terminator], ["准备", octoRect], ["手动输入", "M1.500 7.500l13-4v9h-13z"],
    ["手动操作", "M1.500 3.500h13l-3 10h-7z"],
    ["接点", '<circle cx="8" cy="8" r="4.500"/>'], ["离页连接符", "M3.500 3.500h9v7L8 13l-4.500-2.500z"],
    ["卡片", "M6.500 3.500h8v9h-12v-5z"], ["资料带", "M2.500 4q3 2 6 .5t6-.5v8q-3-1-6 .5t-6 .5z"],
    ["汇总连接", '<circle cx="8" cy="8" r="6"/><path d="M4 4l8 8M12 4l-8 8"/>'],
    ["或者", '<circle cx="8" cy="8" r="6"/><path d="M8 2v12M2 8h12"/>'],
    ["对照", "M4 2.500h8l-8 11h8z"], ["排序", "M8 2l4 6-4 6-4-6zM4 8h8"],
    ["摘录", "M8 3.500l4.500 9h-9z"], ["合并", "M2.500 3h11L8 13z"],
    ["库存数据", "M4.500 3.500h9q-2 4.500 0 9h-9q-4-4.500 0-9z"], ["延期", "M2.500 2.500h6a5.500 5.500 0 0 1 0 11h-6z"],
    ["顺序访问", "M14 13.500H8A5.500 5.500 0 1 1 12 12l2 1.500"],
    ["磁盘", "M2 5.500v5q0 2 6 2t6-2v-5q0-2-6-2t-6 2 6 2 6-2"],
    ["直接访问", "M5 2.500h6q2 0 2 5.500t-2 5.500H5Q3 13.500 3 8t2-5.500zM8.500 2.500Q7 4 7 8t1.500 5.500"],
    ["显示", hexagon]
  ]],
  ["星与旗帜", [
    ["爆炸形 1", star(9, 4)], ["爆炸形 2", star(10, 4.5)], ["四角星", star(4, 1.8)],
    ["五角星", star(5, 2.8)], ["六角星", star(6, 4)], ["七角星", star(7, 4.5)],
    ["八角星", numbered(8, true)], ["十角星", numbered(10, true)],
    ["十二角星", numbered(12, true)], ["十六角星", numbered(16, true)],
    ["二十四角星", numbered(24, true)], ["三十二角星", numbered(32, true)],
    ["上凸带形", "M2 11.500L3.500 9 2 7h3V4.500h6V7h3l-1.500 2 1.500 2.500h-4v-2H6v2z"],
    ["前凸带形", "M2 4.500h4v2h4v-2h4L12.500 7l1.500 2.500h-3v2H5v-2H2L3.500 7z"],
    ["上凸弯带形", "M2 11l1.500-2L2 7.500h3V5q3-2 6 0v2.500h3L12.500 9l1.500 2h-4V9.500q-2-1-4 0V11z"],
    ["前凸弯带形", "M2 5l4-1v2q2 1 4 0V4l4 1-1.500 2L14 9.500h-3v2q-3 1.500-6 0v-2H2L3.500 7z"],
    ["竖卷形", "M5.500 2.500h9v2h-3v9h-9v-2h3zM5.500 4.500h6"],
    ["横卷形", "M2.500 4.500h12v7h-12zM2.500 4.500v9h2v-9M4.500 11.500h-2"],
    ["波形", "M2.500 4q3-3 6 0t6 0v8q-3 3-6 0t-6 0z"],
    ["双波形", "M2.500 4q2-2 3 0t3 0 3 0 3 0v8q-2 2-3 0t-3 0-3 0-3 0z"]
  ]],
  ["标注", [
    ["矩形标注", "M2.500 3.500h12v8h-7l-2 3v-3h-3z"], ["圆角标注", "M2.500 3.500h12v8h-7l-2 3v-3h-3z"],
    ["椭圆标注", "M5 12q-3-1-3-4t6-4.500T14 8t-7 4.500L4 15z"],
    ["云形标注", "M4 11Q1 10 2.500 7.500 2 4 5 4.500 6.500 2.500 8.500 4 11 2.500 12 4.500 15 5 14 7.500q0 3-3 3.500l-4 1z"],
    ["线形标注 1", "M6.500 3.500h8v8h-8zM6 6l-5 8"], ["线形标注 2", "M6.500 3.500h8v8h-8zM6 6H4l-2 8"],
    ["线形标注 3", "M6.500 3.500h8v8h-8zM6 5H3v9"],
    ["强调线标注 1", '<path class="faint" d="M6.500 3.500h8v8h-8z"/><path d="M6.500 3v10M6 6l-4 8"/>'],
    ["强调线标注 2", '<path class="faint" d="M6.500 3.500h8v8h-8z"/><path d="M6.500 3v10M6 6H4l-2 8"/>'],
    ["强调线标注 3", '<path class="faint" d="M6.500 3.500h8v8h-8z"/><path d="M6.500 3v10M6 5H3v9"/>'],
    ["无边框标注 1", '<path class="faint" d="M6.500 3.500h8v8h-8z"/><path d="M6 6l-4 8"/>'],
    ["无边框标注 2", '<path class="faint" d="M6.500 3.500h8v8h-8z"/><path d="M6 6H4l-2 8"/>']
  ]]
];

var menu = document.getElementById("shape-menu");

categories.forEach(function (category) {
  var title = document.createElement("h3");
  title.textContent = category[0];
  menu.appendChild(title);

  var grid = document.createElement("div");
  grid.className = "shape-grid";
  category[1].forEach(function (shape, i) {
    var button = document.createElement("button");
    button.className = "shape";
    button.setAttribute("aria-label", shape[0]);
    if (category[0] === "线条" && i === 1) {
      button.classList.add("selected");
    }
    var drawing = shape[1];
    if (drawing.charAt(0) !== "<") {
      drawing = '<path d="' + drawing + '"/>';
    }
    button.innerHTML = '<svg viewBox="0 0 16 16">' + drawing + '</svg>';
    grid.appendChild(button);
  });
  menu.appendChild(grid);
});

var badge = document.createElement("span");
badge.className = "badge badge-line";
badge.textContent = "3";
menu.appendChild(badge);
```
